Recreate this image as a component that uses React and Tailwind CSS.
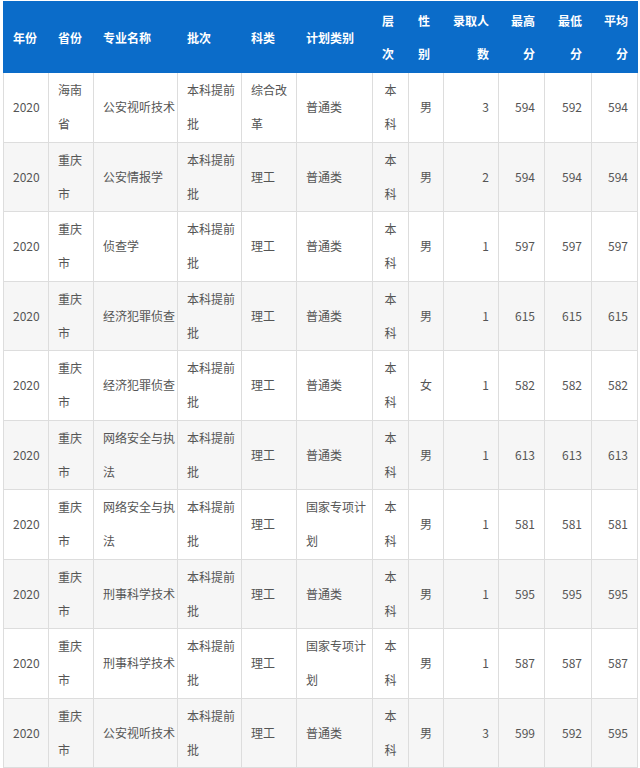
import React from "react";

const widths = [45, 45, 84, 64, 55, 76, 36, 35, 55, 46, 47, 46];

const headers = [
  { lines: ["年份"], align: "left" },
  { lines: ["省份"], align: "left" },
  { lines: ["专业名称"], align: "left" },
  { lines: ["批次"], align: "left" },
  { lines: ["科类"], align: "left" },
  { lines: ["计划类别"], align: "left" },
  { lines: ["层", "次"], align: "left" },
  { lines: ["性", "别"], align: "left" },
  { lines: ["录取人", "数"], align: "right" },
  { lines: ["最高", "分"], align: "right" },
  { lines: ["最低", "分"], align: "right" },
  { lines: ["平均", "分"], align: "right" },
];

const rows = [
  [["2020"], ["海南", "省"], ["公安视听技术"], ["本科提前", "批"], ["综合改", "革"], ["普通类"], ["本", "科"], ["男"], ["3"], ["594"], ["592"], ["594"]],
  [["2020"], ["重庆", "市"], ["公安情报学"], ["本科提前", "批"], ["理工"], ["普通类"], ["本", "科"], ["男"], ["2"], ["594"], ["594"], ["594"]],
  [["2020"], ["重庆", "市"], ["侦查学"], ["本科提前", "批"], ["理工"], ["普通类"], ["本", "科"], ["男"], ["1"], ["597"], ["597"], ["597"]],
  [["2020"], ["重庆", "市"], ["经济犯罪侦查"], ["本科提前", "批"], ["理工"], ["普通类"], ["本", "科"], ["男"], ["1"], ["615"], ["615"], ["615"]],
  [["2020"], ["重庆", "市"], ["经济犯罪侦查"], ["本科提前", "批"], ["理工"], ["普通类"], ["本", "科"], ["女"], ["1"], ["582"], ["582"], ["582"]],
  [["2020"], ["重庆", "市"], ["网络安全与执", "法"], ["本科提前", "批"], ["理工"], ["普通类"], ["本", "科"], ["男"], ["1"], ["613"], ["613"], ["613"]],
  [["2020"], ["重庆", "市"], ["网络安全与执", "法"], ["本科提前", "批"], ["理工"], ["国家专项计", "划"], ["本", "科"], ["男"], ["1"], ["581"], ["581"], ["581"]],
  [["2020"], ["重庆", "市"], ["刑事科学技术"], ["本科提前", "批"], ["理工"], ["普通类"], ["本", "科"], ["男"], ["1"], ["595"], ["595"], ["595"]],
  [["2020"], ["重庆", "市"], ["刑事科学技术"], ["本科提前", "批"], ["理工"], ["国家专项计", "划"], ["本", "科"], ["男"], ["1"], ["587"], ["587"], ["587"]],
  [["2020"], ["重庆", "市"], ["公安视听技术"], ["本科提前", "批"], ["理工"], ["普通类"], ["本", "科"], ["男"], ["3"], ["599"], ["592"], ["595"]],
];

const dataAlign = ["left", "left", "left", "left", "left", "left", "center", "center", "right", "right", "right", "right"];

function alignClass(a) {
  if (a === "right") return "text-right pr-[9px] pl-[4px]";
  if (a === "center") return "text-center px-[2px]";
  return "text-left pl-[9px] pr-[4px]";
}

export default function App() {
  return (
    <div
      className="w-[640px] h-[768px] bg-white overflow-hidden pt-[1px] pl-[3px]"
      style={{ fontFamily: '"Noto Sans CJK SC", "Noto Sans", sans-serif' }}
    >
      <table className="table-fixed border-collapse w-[634px]">
        <colgroup>
          {widths.map((w, i) => (
            <col key={i} style={{ width: w }} />
          ))}
        </colgroup>
        <thead>
          <tr className="bg-[#0b6cc9] h-[71px]">
            {headers.map((h, i) => (
              <th
                key={i}
                className={`border border-[#0b6cc9] text-white font-bold text-[12px] leading-[33px] align-middle ${alignClass(h.align)}`}
              >
                {h.lines.map((l, j) => (
                  <div key={j} className="whitespace-nowrap">{l}</div>
                ))}
              </th>
            ))}
          </tr>
        </thead>
        <tbody>
          {rows.map((r, ri) => (
            <tr key={ri} className={ri % 2 === 1 ? "bg-[#f6f6f6]" : "bg-white"}>
              {r.map((c, ci) => (
                <td
                  key={ci}
                  className={`border border-[#dddddd] text-[#555555] text-[12px] leading-[34.25px] align-middle h-[69.5px] ${alignClass(dataAlign[ci])}`}
                >
                  {c.map((l, j) => (
                    <div key={j} className="whitespace-nowrap">{l}</div>
                  ))}
                </td>
              ))}
            </tr>
          ))}
        </tbody>
      </table>
    </div>
  );
}
